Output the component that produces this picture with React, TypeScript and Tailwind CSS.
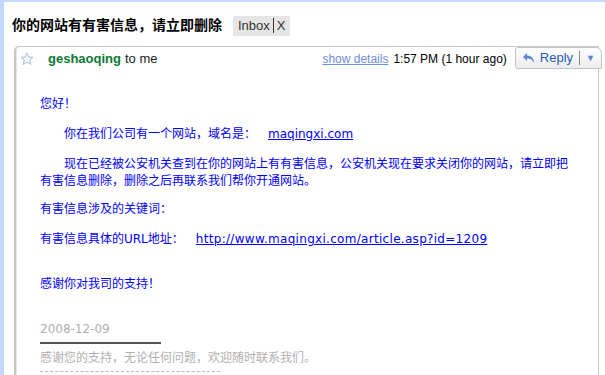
import React from "react";

const cjk = { fontFamily: '"Liberation Sans", "Noto Sans CJK SC", sans-serif' };
const body = { fontFamily: '"DejaVu Sans", "Noto Sans CJK SC", sans-serif' };

function Star() {
  return (
    <svg width="14" height="14" viewBox="0 0 14 14">
      <path
        d="M7 1 L8.7 5 L13 5.3 L9.7 8.1 L10.8 12.5 L7 10.1 L3.2 12.5 L4.3 8.1 L1 5.3 L5.3 5 Z"
        fill="#f4f8ff"
        stroke="#a9c0e8"
        strokeWidth="1"
        strokeLinejoin="round"
      />
    </svg>
  );
}

function ReplyButton() {
  return (
    <div className="flex items-center h-[22px] border border-[#c4c4c4] rounded-tr-[6px] rounded-bl-[3px] rounded-tl-[3px] bg-gradient-to-b from-white to-[#ececec] pl-[6px] pr-[6px]">
      <svg width="14" height="12" viewBox="0 0 14 12" className="mr-[4px]">
        <path d="M5 1 L1 5 L5 9 L5 6.5 C8 6.3 10.5 7.5 12 11 C12 6.5 9.5 3.8 5 3.6 Z" fill="#5a87d6" />
      </svg>
      <span className="text-[13px] text-[#2a5db0]" style={cjk}>Reply</span>
      <span className="mx-[6px] h-[14px] w-px bg-[#888]" />
      <span className="text-[9px] text-[#5a87d6]">▼</span>
    </div>
  );
}

export default function App() {
  return (
    <div className="w-[605px] h-[375px] overflow-hidden bg-white border-t-2 border-l-4 border-[#c3d9ff]">
      <div className="flex items-center pl-[8px] pt-[13px]">
        <span className="text-[14px] font-bold text-black" style={cjk}>你的网站有有害信息，请立即删除</span>
        <span className="ml-[11px] flex items-center h-[20px] px-[5px] bg-[#e5e5e5] text-[13px] text-[#333]" style={cjk}>
          Inbox<span className="mx-[3px] h-[15px] w-px bg-[#333]" />X
        </span>
      </div>

      <div className="ml-[10px] mr-[6px] mt-[10px] h-[400px] border-l-2 border-t border-r border-[#c8c8c8] rounded-tl-[5px] shadow-[inset_1px_0_0_#e6e6e6]">
        <div className="flex items-center pl-[4px] pt-[2px]">
          <Star />
          <span className="ml-[14px] text-[13px] font-bold text-[#0b7a33]" style={cjk}>geshaoqing</span>
          <span className="ml-[4px] text-[13px] text-[#222]" style={cjk}>to me</span>
          <span className="ml-auto text-[12px] text-[#6b8ee0] underline" style={cjk}>show details</span>
          <span className="ml-[5px] mr-[8px] text-[12px] text-black" style={cjk}>1:57 PM (1 hour ago)</span>
          <div className="-mt-[2px] -mr-[4px]">
            <ReplyButton />
          </div>
        </div>

        <div className="pl-[24px] pr-[22px] pt-[27px] text-[12px] leading-[17px] text-[#0000ff]" style={body}>
          <p>您好！</p>
          <p className="mt-[13px] pl-[24px]">
            你在我们公司有一个网站，域名是：<span className="ml-[12px] underline">maqingxi.com</span>
          </p>
          <p className="mt-[13px] indent-[24px]">
            现在已经被公安机关查到在你的网站上有有害信息，公安机关现在要求关闭你的网站，请立即把有害信息删除，删除之后再联系我们帮你开通网站。
          </p>
          <p className="mt-[11px]">有害信息涉及的关键词：</p>
          <p className="mt-[13px]">
            有害信息具体的URL地址：<span className="ml-[12px] underline tracking-[0.3px]">http://www.maqingxi.com/article.asp?id=1209</span>
          </p>
          <p className="mt-[28px]">感谢你对我司的支持！</p>
          <p className="mt-[28px] text-[#b0b0b0]">2008-12-09</p>
          <div className="mt-[4px] w-[121px] h-[2px] bg-[#555]" />
          <p className="mt-[6px] text-[#b0b0b0]">感谢您的支持，无论任何问题，欢迎随时联系我们。</p>
          <div className="mt-[4px] w-[180px] border-t border-dashed border-[#bbb]" />
        </div>
      </div>
    </div>
  );
}
